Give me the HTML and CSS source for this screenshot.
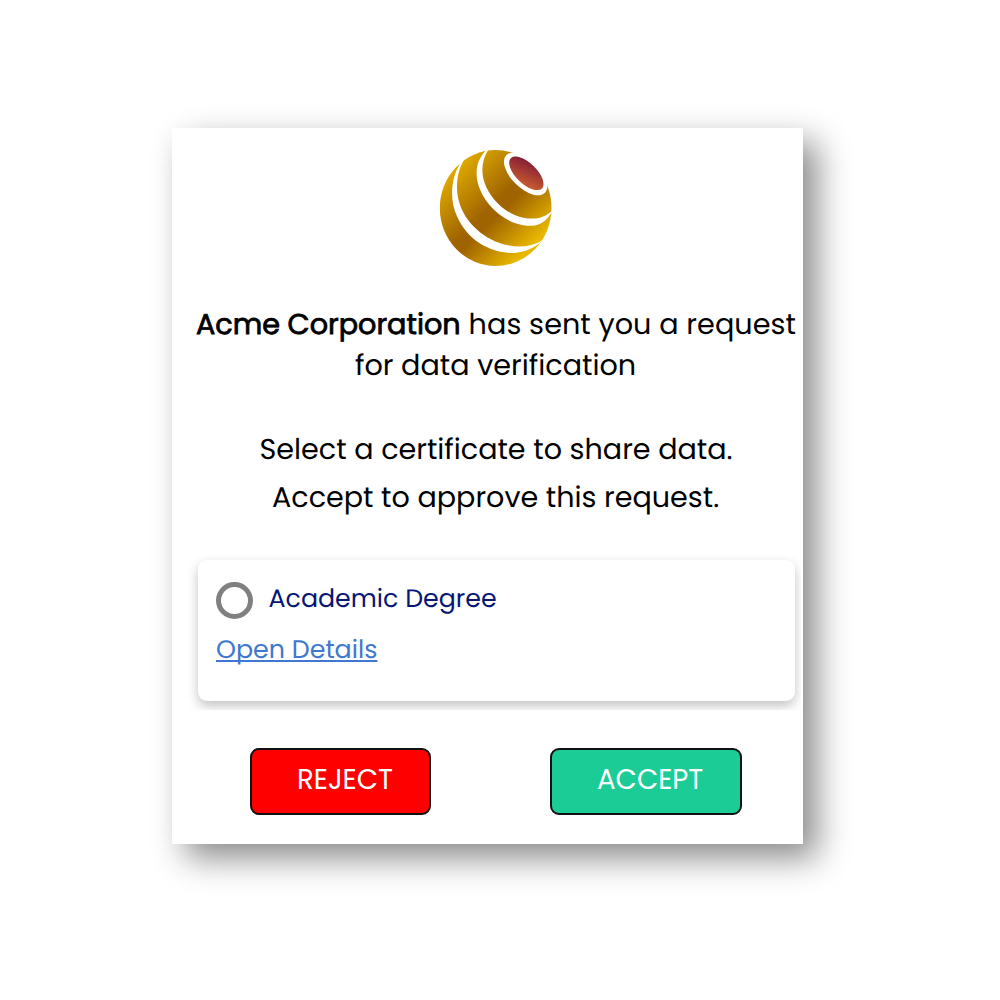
FILE: index.html
```html
<!DOCTYPE html>
<html lang="en">
<head>
<meta charset="utf-8">
<title>Data verification request</title>
<link rel="stylesheet" href="styles.css">
</head>
<body>
<main class="dialog">
  <svg class="logo" viewBox="0 0 420 420" aria-hidden="true">
    <defs>
      <linearGradient id="gold" gradientUnits="userSpaceOnUse" x1="80" y1="75" x2="345" y2="345">
        <stop offset="0" stop-color="#e4b000"/>
        <stop offset=".46" stop-color="#9f6300"/>
        <stop offset=".54" stop-color="#9f6300"/>
        <stop offset=".9" stop-color="#e8b800"/>
      </linearGradient>
      <linearGradient id="core" x1=".1" y1="0" x2=".9" y2="1">
        <stop offset="0" stop-color="#7e1638"/>
        <stop offset="1" stop-color="#cf642d"/>
      </linearGradient>
    </defs>
    <ellipse cx="212" cy="204" rx="167.500" ry="174" fill="url(#gold)"/>
    <path fill="#fff" d="M108 65C78 112 72 178 96 229C128 304 200 340 266 339C299 337 329 325 354 300C322 319 285 324 250 316C179 302 119 247 102 185C89 137 98 91 118 58Z"/>
    <path fill="#fff" d="M184 30C151 62 147 107 166 151C188 204 246 252 305 257C341 260 366 246 384 209C359 235 329 240 295 233C241 222 196 176 180 132C167 96 170 60 190 29Z"/>
    <ellipse cx="302" cy="102" rx="81" ry="42" transform="rotate(44 302 102)" fill="#fff"/>
    <ellipse cx="304" cy="100" rx="65" ry="31" transform="rotate(44 304 100)" fill="url(#core)"/>
  </svg>
  <h1 class="headline"><span class="line"><strong class="company">Acme Corporation</strong><span class="sent">has sent you a request</span></span><span class="line purpose">for data verification</span></h1>
  <div class="instructions">
    <p class="select-note">Select a certificate to share data.</p>
    <p class="accept-note">Accept to approve this request.</p>
  </div>
  <div class="options">
    <section class="option">
      <label class="choice"><span class="radio"></span><span class="degree">Academic Degree</span></label>
      <a class="details" href="#">Open Details</a>
    </section>
  </div>
  <div class="actions">
    <button class="button reject">REJECT</button>
    <button class="button accept">ACCEPT</button>
  </div>
</main>
</body>
</html>
```
FILE: styles.css
```css
* { box-sizing: border-box; }
body {
  min-height: 1000px;
  margin: 0;
  padding: 128px 0 0 172px;
  background: #fff;
  color: #000;
  font-family: Poppins, Inter, "Open Sans", sans-serif;
  font-weight: 400;
  text-rendering: geometricPrecision;
}
.dialog {
  display: flex;
  flex-direction: column;
  width: 631px;
  height: 716px;
  padding-top: 12px;
  background: #fff;
  box-shadow: 14px 14px 31px rgba(0, 0, 0, .46);
}
.logo { width: 140px; height: 140px; margin-left: 253px; flex: none; }
.headline {
  margin: 25px 0 0;
  padding-left: 24px;
  font-size: 28.650px;
  font-weight: 400;
  line-height: 40.500px;
  white-space: nowrap;
}
.line { display: flex; gap: 8px; }
.company { font-weight: 400; -webkit-text-stroke: .8px #000; }
.sent { letter-spacing: .06px; }
.purpose { padding-left: 159px; }
.instructions {
  margin-top: 40px;
  font-size: 28.600px;
  line-height: 48px;
  white-space: nowrap;
}
.instructions p { margin: 0; }
.select-note { padding-left: 87.500px; }
.accept-note { padding-left: 100px; }
.options {
  width: 629px;
  height: 172px;
  margin-top: 16px;
  padding: 22px 6px 10px 26px;
  overflow: hidden;
}
.option {
  height: 141px;
  padding: 18px;
  border-radius: 9px;
  background: #fff;
  box-shadow: 0 5px 12px rgba(0, 0, 0, .24);
}
.choice { display: flex; align-items: center; gap: 15.500px; height: 44px; color: #071675; font-size: 25.300px; }
.degree { margin-top: -3px; }
.radio { width: 37px; height: 37px; border: 5px solid #808080; border-radius: 50%; }
.details { display: block; width: max-content; margin-top: 8px; color: #3f78d0; font-size: 25.350px; line-height: 38px; text-decoration-thickness: 2px; text-underline-offset: 2px; text-decoration-skip-ink: none; }
.actions { display: flex; gap: 119px; margin-top: 38px; padding-left: 78px; }
.button {
  height: 67px;
  padding: 0 0 3px 45px;
  border: 2px solid #111;
  border-radius: 9px;
  color: #fff;
  font: inherit;
  font-size: 27.600px;
  text-align: left;
}
.reject { width: 181px; background: #f00; }
.accept { width: 192px; background: #1bcc96; }
```
